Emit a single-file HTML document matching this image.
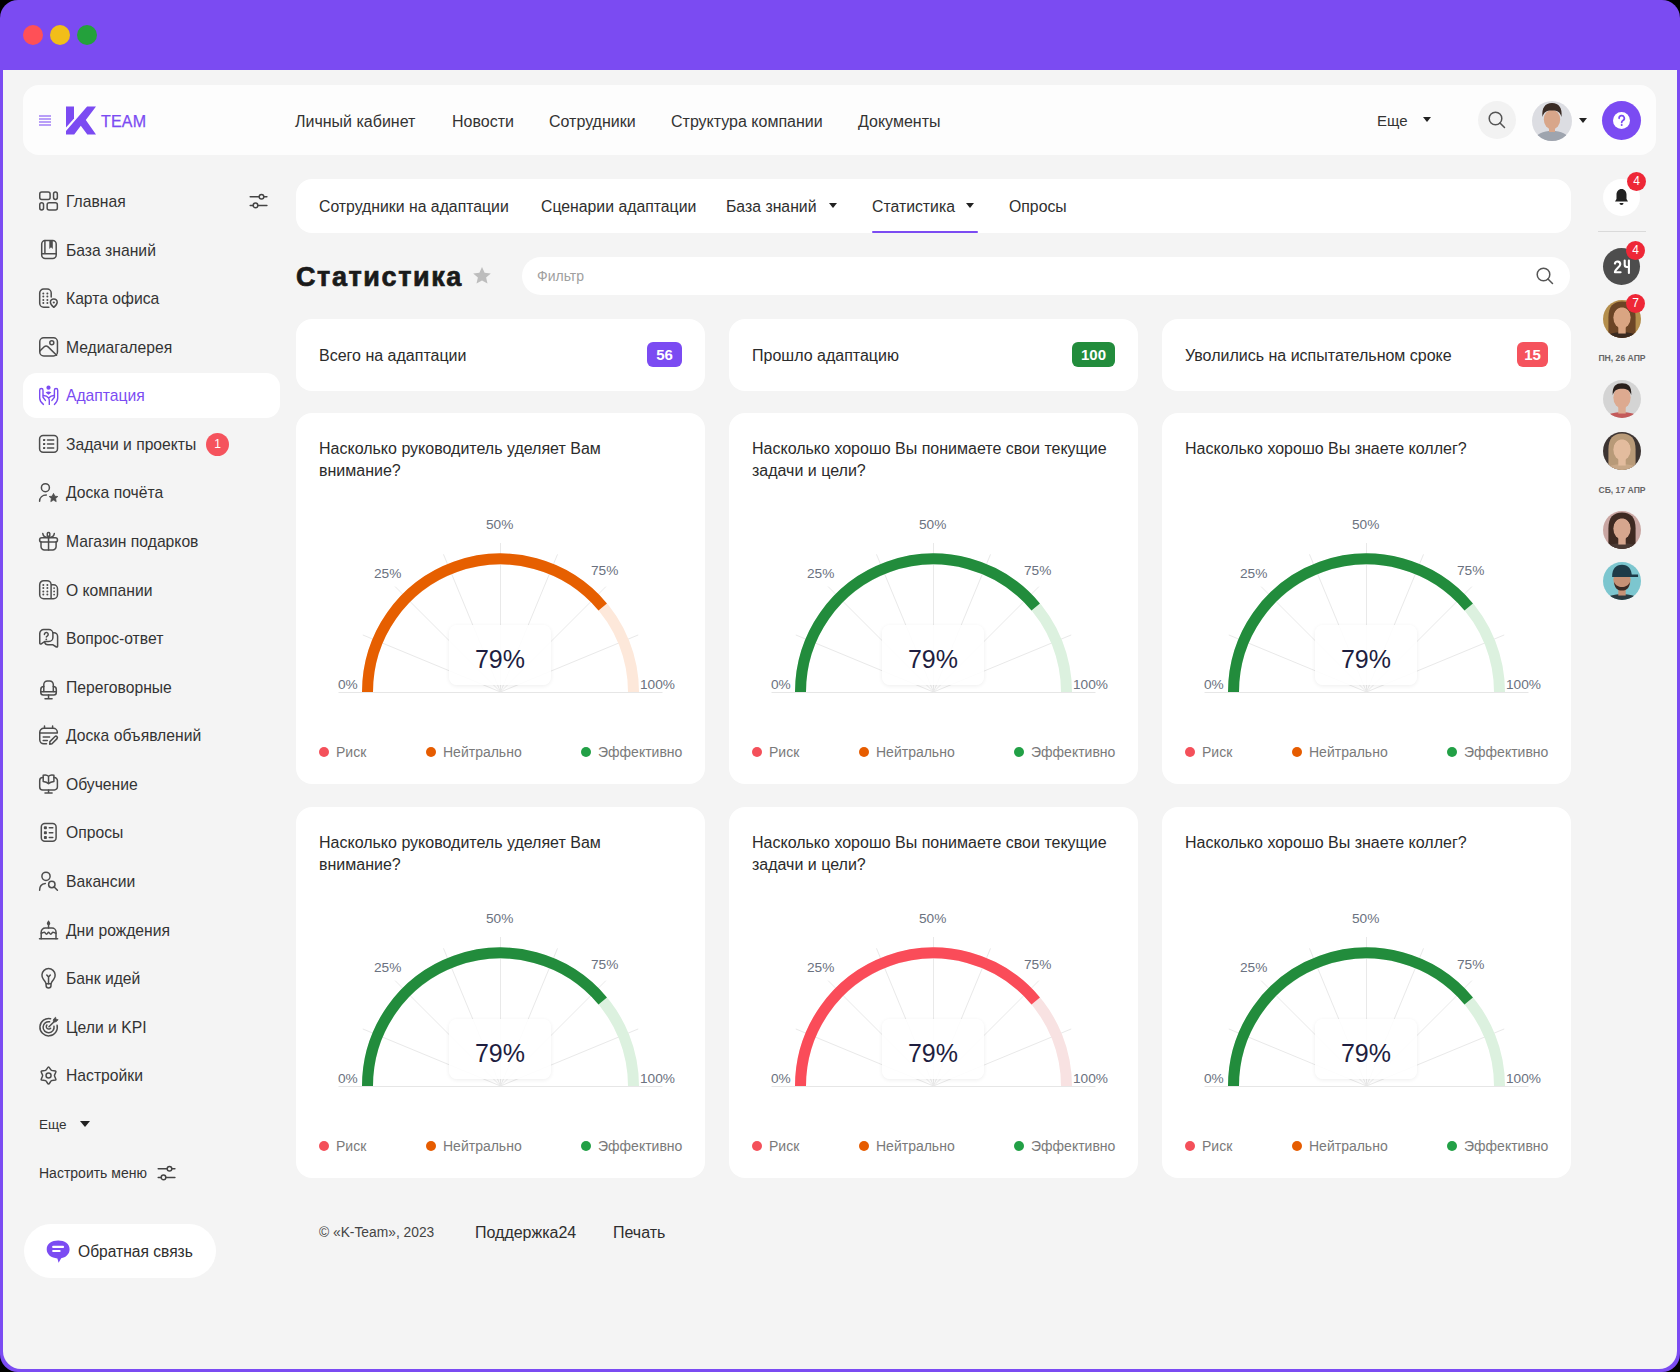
<!DOCTYPE html>
<html><head><meta charset="utf-8">
<style>
*{box-sizing:border-box;margin:0;padding:0}
html,body{width:1680px;height:1372px;overflow:hidden;background:#000}
body{font-family:"Liberation Sans",sans-serif;color:#2B2B2B;position:relative}
.frame{position:absolute;left:0;top:0;width:1680px;height:1372px;background:#7B4BF2;border-radius:18px}
.inner{position:absolute;left:3px;top:70px;width:1674px;height:1299px;background:#F4F4F4;border-radius:0 0 18px 18px}
.dot{position:absolute;top:25px;width:20px;height:20px;border-radius:50%}
.abs{position:absolute}
.hdr{position:absolute;left:23px;top:85px;width:1633px;height:70px;background:#FDFDFD;border-radius:16px}
.nav{position:absolute;top:111.5px;font-size:16px;color:#333;white-space:nowrap;line-height:20px}
.sub{position:absolute;left:296px;top:179px;width:1275px;height:54px;background:#fff;border-radius:16px}
.subi{position:absolute;top:196.5px;font-size:15.8px;color:#2E2E2E;white-space:nowrap;line-height:20px}
.tri{position:absolute;width:0;height:0;border-left:4px solid transparent;border-right:4px solid transparent;border-top:5px solid #222}
.side{position:absolute;left:66px;font-size:15.7px;color:#333;white-space:nowrap;line-height:20px}
.sico{position:absolute;left:38px;width:21px;height:21px}
.card{position:absolute;background:#fff;border-radius:16px}
.stat{top:319px;width:409px;height:72px}
.stat .t{position:absolute;left:23px;top:26.5px;font-size:16px;color:#2B2B2B;white-space:nowrap;line-height:20px}
.badge{position:absolute;top:23px;height:25px;border-radius:6px;color:#fff;font-weight:700;font-size:15px;line-height:25px;text-align:center}
.gcard{width:409px;height:371px}
.gsvg{position:absolute;left:0;top:0}
.q{position:absolute;left:23px;top:24px;font-size:16px;line-height:21.5px;color:#2B2B2B;white-space:nowrap}
.gbox{position:absolute;left:153px;top:211px;width:102px;height:60px;border-radius:8px;background:rgba(255,255,255,0.88);box-shadow:0 1px 4px rgba(0,0,0,0.07)}
.gval{position:absolute;left:153px;top:231px;width:102px;text-align:center;font-size:25px;line-height:28px;color:#1E1E3F}
.gl{position:absolute;font-size:13.7px;line-height:16px;color:#6B7280;white-space:nowrap}
.leg{position:absolute;top:329px;font-size:14px;line-height:18px;color:#7A7A7A;padding-left:17px;white-space:nowrap}
.leg i{position:absolute;left:0;top:4px;width:10px;height:10px;border-radius:50%}
.av{position:absolute;border-radius:50%}
.rb{position:absolute;width:19px;height:19px;border-radius:50%;background:#EE2737;color:#fff;font-size:12px;line-height:19px;text-align:center}
.date{position:absolute;left:1592px;width:60px;text-align:center;font-size:8.6px;font-weight:700;color:#666;line-height:10px}
</style></head><body>
<div class="frame"></div>
<div class="dot" style="left:23px;background:#FF5057"></div>
<div class="dot" style="left:50px;background:#F2BE19"></div>
<div class="dot" style="left:77px;background:#24A13C"></div>
<div class="inner"></div>

<!-- header -->
<div class="hdr"></div>
<svg class="abs" style="left:38px;top:114px" width="14" height="13" viewBox="0 0 14 13"><g stroke="#A887F7" stroke-width="1.6"><line x1="1" y1="2" x2="13" y2="2"/><line x1="1" y1="5" x2="13" y2="5"/><line x1="1" y1="8" x2="13" y2="8"/><line x1="1" y1="11" x2="13" y2="11"/></g></svg>
<svg class="abs" style="left:0;top:0" width="160" height="160" viewBox="0 0 160 160"><g fill="#7B4BF2"><path d="M66,106.5H74V118.5L66,127.5Z"/><path d="M87.1,106.5H96L85.8,120L96,134.6H87.3L80.8,125.8L74.2,134.6H66V131Z"/></g></svg>
<div class="abs" style="left:101px;top:112.3px;font-size:16px;line-height:20px;color:#7B4BF2;letter-spacing:0.2px;-webkit-text-stroke:0.25px #7B4BF2">TEAM</div>
<div class="nav" style="left:295px">Личный кабинет</div>
<div class="nav" style="left:452px">Новости</div>
<div class="nav" style="left:549px">Сотрудники</div>
<div class="nav" style="left:671px">Структура компании</div>
<div class="nav" style="left:858px">Документы</div>
<div class="nav" style="left:1377px;font-size:15px;top:110.5px">Еще</div>
<div class="tri" style="left:1423px;top:117px"></div>
<div class="av" style="left:1478px;top:101px;width:38px;height:38px;background:#F2F2F2"></div>
<svg class="abs" style="left:1487px;top:110px" width="20" height="20" viewBox="0 0 20 20"><circle cx="8.5" cy="8.5" r="6.3" fill="none" stroke="#555" stroke-width="1.5"/><line x1="13" y1="13" x2="17.5" y2="17.5" stroke="#555" stroke-width="1.5" stroke-linecap="round"/></svg>
<svg class="abs" style="left:1532px;top:101px" width="40" height="40" viewBox="0 0 40 40"><defs><clipPath id="c0"><circle cx="20" cy="20" r="20"/></clipPath></defs><g clip-path="url(#c0)"><rect width="40" height="40" fill="#DCDDE2"/><path d="M2,42C3,33 10,30 20,30C30,30 37,33 38,42Z" fill="#9EA4AE"/><rect x="17" y="24" width="6" height="7" fill="#D8A68A"/><ellipse cx="20" cy="18.5" rx="8.2" ry="9.8" fill="#D8A68A"/><path d="M10.5,16C9.5,7 13,2 20,2C27,2 30.5,7 29.5,16C28,11 26,9.5 20,9.5C14,9.5 12,11 10.5,16Z" fill="#3A2C25"/></g></svg>
<div class="tri" style="left:1579px;top:118px"></div>
<div class="av" style="left:1602px;top:101px;width:39px;height:39px;background:#7B4BF2"></div>
<div class="av" style="left:1613px;top:112px;width:17px;height:17px;background:#fff"></div><svg class="abs" style="left:1600px;top:100px" width="40" height="40" viewBox="1600 100 40 40"><path d="M1619.1,118.3A2.6,2.6 0 1 1 1623,120.4C1622.1,121 1621.7,121.5 1621.7,122.4" fill="none" stroke="#7B4BF2" stroke-width="1.7" stroke-linecap="round"/><circle cx="1621.7" cy="125.1" r="1" fill="#7B4BF2"/></svg>

<!-- right column -->
<div class="av" style="left:1603px;top:179px;width:37px;height:37px;background:#fff"></div>
<svg class="abs" style="left:1612px;top:187px" width="19" height="20" viewBox="0 0 19 20"><path d="M9.5,2C6.5,2 4.5,4.5 4.5,7.5V12L3,14.5H16L14.5,12V7.5C14.5,4.5 12.5,2 9.5,2Z" fill="#222"/><path d="M7.5,16A2,2 0 0 0 11.5,16Z" fill="#222"/></svg>
<div class="rb" style="left:1627px;top:172px">4</div>
<div class="abs" style="left:1598px;top:231px;width:48px;height:1px;background:#DADADA"></div>
<div class="av" style="left:1603px;top:248px;width:37px;height:37px;background:#4D4D4D"></div><svg class="abs" style="left:1600px;top:245px" width="40" height="40" viewBox="1600 245 40 40"><path d="M1614.9,263.6A2.75,2.75 0 0 1 1620.3,264.2C1620.3,266.6 1614.9,269.6 1614.9,272.2H1620.6" fill="none" stroke="#fff" stroke-width="2.1" stroke-linecap="round" stroke-linejoin="round"/><path d="M1624.7,260.5V264.8A2.2,2.2 0 0 0 1626.9,267H1628.9M1628.9,260.5V272.9" fill="none" stroke="#fff" stroke-width="2.1" stroke-linecap="round" stroke-linejoin="round"/></svg>
<div class="rb" style="left:1626px;top:241px">4</div>
<svg class="abs" style="left:1603px;top:300px" width="38" height="38" viewBox="0 0 40 40"><defs><clipPath id="c1"><circle cx="20" cy="20" r="20"/></clipPath></defs><g clip-path="url(#c1)"><rect width="40" height="40" fill="#B48E4C"/><g transform="translate(20,21) scale(1.3) translate(-20,-20)"><path d="M9,40V18C9,9 13,5 20,5C27,5 31,9 31,18V40Z" fill="#6B4526"/><path d="M2,42C3,33 10,30 20,30C30,30 37,33 38,42Z" fill="#3A2A20"/><rect x="17" y="24" width="6" height="7" fill="#D9A582"/><ellipse cx="20" cy="18" rx="7" ry="8.8" fill="#D9A582"/><path d="M12.5,17C12,9 15,6 20,6C25,6 28,9 27.5,17C26,12 23,10 20,10C17,10 14,12 12.5,17Z" fill="#6B4526"/></g></g></svg>
<div class="rb" style="left:1626px;top:294px">7</div>
<div class="date" style="top:353px">ПН, 26 АПР</div>
<svg class="abs" style="left:1603px;top:380px" width="38" height="38" viewBox="0 0 40 40"><defs><clipPath id="c2"><circle cx="20" cy="20" r="20"/></clipPath></defs><g clip-path="url(#c2)"><rect width="40" height="40" fill="#D4D4D4"/><g transform="translate(20,21) scale(1.3) translate(-20,-20)"><path d="M2,42C3,33 10,30 20,30C30,30 37,33 38,42Z" fill="#C45A5A"/><rect x="17" y="24" width="6" height="7" fill="#DDAA90"/><ellipse cx="20" cy="18" rx="7" ry="8.8" fill="#DDAA90"/><path d="M12.5,16C12,9 15,6.5 20,6.5C25,6.5 28,9 27.5,16C26,12 24,11 20,11C16,11 14,12 12.5,16Z" fill="#2A201C"/></g></g></svg>
<svg class="abs" style="left:1603px;top:432px" width="38" height="38" viewBox="0 0 40 40"><defs><clipPath id="c3"><circle cx="20" cy="20" r="20"/></clipPath></defs><g clip-path="url(#c3)"><rect width="40" height="40" fill="#3C3432"/><g transform="translate(20,21) scale(1.3) translate(-20,-20)"><path d="M9,40V18C9,9 13,5 20,5C27,5 31,9 31,18V40Z" fill="#B89A78"/><path d="M2,42C3,33 10,30 20,30C30,30 37,33 38,42Z" fill="#C8A888"/><rect x="17" y="24" width="6" height="7" fill="#E3BC9E"/><ellipse cx="20" cy="18" rx="7" ry="8.8" fill="#E3BC9E"/><path d="M12.5,17C12,9 15,6 20,6C25,6 28,9 27.5,17C26,12 23,10 20,10C17,10 14,12 12.5,17Z" fill="#B89A78"/></g></g></svg>
<div class="date" style="top:485px">СБ, 17 АПР</div>
<svg class="abs" style="left:1603px;top:511px" width="38" height="38" viewBox="0 0 40 40"><defs><clipPath id="c4"><circle cx="20" cy="20" r="20"/></clipPath></defs><g clip-path="url(#c4)"><rect width="40" height="40" fill="#C9A6A2"/><g transform="translate(20,21) scale(1.3) translate(-20,-20)"><path d="M9,40V18C9,9 13,5 20,5C27,5 31,9 31,18V40Z" fill="#3E2A22"/><path d="M2,42C3,33 10,30 20,30C30,30 37,33 38,42Z" fill="#4A3A34"/><rect x="17" y="24" width="6" height="7" fill="#D6A68E"/><ellipse cx="20" cy="18" rx="7" ry="8.8" fill="#D6A68E"/><path d="M12.5,17C12,9 15,6 20,6C25,6 28,9 27.5,17C26,12 23,10 20,10C17,10 14,12 12.5,17Z" fill="#3E2A22"/></g></g></svg>
<svg class="abs" style="left:1603px;top:562px" width="38" height="38" viewBox="0 0 40 40"><defs><clipPath id="c5"><circle cx="20" cy="20" r="20"/></clipPath></defs><g clip-path="url(#c5)"><rect width="40" height="40" fill="#7CC6CF"/><g transform="translate(20,21) scale(1.3) translate(-20,-20)"><path d="M2,42C3,33 10,30 20,30C30,30 37,33 38,42Z" fill="#2A3A40"/><rect x="17" y="24" width="6" height="7" fill="#C69276"/><ellipse cx="20" cy="18" rx="7" ry="8.8" fill="#C69276"/><path d="M12,16C12,9 15,6 20,6C25,6 28,9 28,16Z M24,14H33V16H24Z" fill="#1E3B48"/><path d="M13.5,20C14,25 16.5,27 20,27C23.5,27 26,25 26.5,20C25,23 23,24 20,24C17,24 15,23 13.5,20Z" fill="#3A2A24"/></g></g></svg>

<!-- subnav -->
<div class="sub"></div>
<div class="subi" style="left:319px">Сотрудники на адаптации</div>
<div class="subi" style="left:541px">Сценарии адаптации</div>
<div class="subi" style="left:726px">База знаний</div>
<div class="tri" style="left:829px;top:203px"></div>
<div class="subi" style="left:872px">Статистика</div>
<div class="tri" style="left:966px;top:203px"></div>
<div class="abs" style="left:872px;top:231px;width:106px;height:2px;background:#7B4BF2;border-radius:1px"></div>
<div class="subi" style="left:1009px">Опросы</div>

<!-- title + filter -->
<div class="abs" style="left:296px;top:260.5px;font-size:27px;font-weight:700;line-height:32px;color:#1A1A1A;letter-spacing:1.6px;-webkit-text-stroke:0.7px #1A1A1A;white-space:nowrap">Статистика</div>
<svg class="abs" style="left:471.5px;top:266px" width="20" height="19" viewBox="0 0 20 19"><path d="M10,1L12.6,6.8L18.8,7.4L14.1,11.5L15.5,17.6L10,14.4L4.5,17.6L5.9,11.5L1.2,7.4L7.4,6.8Z" fill="#BDBDBD"/></svg>
<div class="abs" style="left:522px;top:257px;width:1048px;height:38px;background:#fff;border-radius:19px"></div>
<div class="abs" style="left:537px;top:268px;font-size:14px;line-height:16px;color:#A0A0A0">Фильтр</div>
<svg class="abs" style="left:1535px;top:266px" width="20" height="20" viewBox="0 0 20 20"><circle cx="8.5" cy="8.5" r="6.3" fill="none" stroke="#555" stroke-width="1.5"/><line x1="13" y1="13" x2="17.5" y2="17.5" stroke="#555" stroke-width="1.5" stroke-linecap="round"/></svg>

<!-- stat cards -->
<div class="card stat" style="left:296px"><div class="t">Всего на адаптации</div><div class="badge" style="left:351px;width:35px;background:#7B4BF2">56</div></div>
<div class="card stat" style="left:729px"><div class="t">Прошло адаптацию</div><div class="badge" style="left:343px;width:43px;background:#228C3C">100</div></div>
<div class="card stat" style="left:1162px"><div class="t">Уволились на испытательном сроке</div><div class="badge" style="left:355px;width:31px;background:#F5535D">15</div></div>

<!-- gauge cards -->
<div class="card gcard" style="left:296px;top:413px"><div style="position:absolute;left:0;top:1px;width:409px;height:369px">
<div class="q">Насколько руководитель уделяет Вам<br>внимание?</div>
<svg class="gsvg" width="409" height="369" viewBox="0 0 409 369"><line x1="42.5" y1="278.5" x2="366.5" y2="278.5" stroke="#E6E6E6" stroke-width="1"/><line x1="204.5" y1="278" x2="66.84" y2="220.98" stroke="#E9E9E9" stroke-width="1"/><line x1="204.5" y1="278" x2="99.14" y2="172.64" stroke="#E9E9E9" stroke-width="1"/><line x1="204.5" y1="278" x2="147.48" y2="140.34" stroke="#E9E9E9" stroke-width="1"/><line x1="204.5" y1="278" x2="204.50" y2="129.00" stroke="#E9E9E9" stroke-width="1"/><line x1="204.5" y1="278" x2="261.52" y2="140.34" stroke="#E9E9E9" stroke-width="1"/><line x1="204.5" y1="278" x2="309.86" y2="172.64" stroke="#E9E9E9" stroke-width="1"/><line x1="204.5" y1="278" x2="342.16" y2="220.98" stroke="#E9E9E9" stroke-width="1"/><path d="M71.5,278 A133,133 0 0 1 337.5,278" fill="none" stroke="#FDE8DA" stroke-width="11"/><path d="M71.5,278 A133,133 0 0 1 306.71,192.90" fill="none" stroke="#E65F00" stroke-width="11"/></svg>
<div class="gbox"></div>
<div class="gval">79%</div>
<div class="gl" style="left:42px;top:263px">0%</div>
<div class="gl" style="left:78px;top:152px">25%</div>
<div class="gl" style="left:190px;top:102.5px">50%</div>
<div class="gl" style="left:295px;top:149px">75%</div>
<div class="gl" style="left:344px;top:263px">100%</div>
<div class="leg" style="left:23px"><i style="background:#F4505A"></i>Риск</div>
<div class="leg" style="left:130px"><i style="background:#E65C00"></i>Нейтрально</div>
<div class="leg" style="left:285px"><i style="background:#22A046"></i>Эффективно</div>
</div></div>
<div class="card gcard" style="left:729px;top:413px"><div style="position:absolute;left:0;top:1px;width:409px;height:369px">
<div class="q">Насколько хорошо Вы понимаете свои текущие<br>задачи и цели?</div>
<svg class="gsvg" width="409" height="369" viewBox="0 0 409 369"><line x1="42.5" y1="278.5" x2="366.5" y2="278.5" stroke="#E6E6E6" stroke-width="1"/><line x1="204.5" y1="278" x2="66.84" y2="220.98" stroke="#E9E9E9" stroke-width="1"/><line x1="204.5" y1="278" x2="99.14" y2="172.64" stroke="#E9E9E9" stroke-width="1"/><line x1="204.5" y1="278" x2="147.48" y2="140.34" stroke="#E9E9E9" stroke-width="1"/><line x1="204.5" y1="278" x2="204.50" y2="129.00" stroke="#E9E9E9" stroke-width="1"/><line x1="204.5" y1="278" x2="261.52" y2="140.34" stroke="#E9E9E9" stroke-width="1"/><line x1="204.5" y1="278" x2="309.86" y2="172.64" stroke="#E9E9E9" stroke-width="1"/><line x1="204.5" y1="278" x2="342.16" y2="220.98" stroke="#E9E9E9" stroke-width="1"/><path d="M71.5,278 A133,133 0 0 1 337.5,278" fill="none" stroke="#DCF1DF" stroke-width="11"/><path d="M71.5,278 A133,133 0 0 1 306.71,192.90" fill="none" stroke="#228C3C" stroke-width="11"/></svg>
<div class="gbox"></div>
<div class="gval">79%</div>
<div class="gl" style="left:42px;top:263px">0%</div>
<div class="gl" style="left:78px;top:152px">25%</div>
<div class="gl" style="left:190px;top:102.5px">50%</div>
<div class="gl" style="left:295px;top:149px">75%</div>
<div class="gl" style="left:344px;top:263px">100%</div>
<div class="leg" style="left:23px"><i style="background:#F4505A"></i>Риск</div>
<div class="leg" style="left:130px"><i style="background:#E65C00"></i>Нейтрально</div>
<div class="leg" style="left:285px"><i style="background:#22A046"></i>Эффективно</div>
</div></div>
<div class="card gcard" style="left:1162px;top:413px"><div style="position:absolute;left:0;top:1px;width:409px;height:369px">
<div class="q">Насколько хорошо Вы знаете коллег?</div>
<svg class="gsvg" width="409" height="369" viewBox="0 0 409 369"><line x1="42.5" y1="278.5" x2="366.5" y2="278.5" stroke="#E6E6E6" stroke-width="1"/><line x1="204.5" y1="278" x2="66.84" y2="220.98" stroke="#E9E9E9" stroke-width="1"/><line x1="204.5" y1="278" x2="99.14" y2="172.64" stroke="#E9E9E9" stroke-width="1"/><line x1="204.5" y1="278" x2="147.48" y2="140.34" stroke="#E9E9E9" stroke-width="1"/><line x1="204.5" y1="278" x2="204.50" y2="129.00" stroke="#E9E9E9" stroke-width="1"/><line x1="204.5" y1="278" x2="261.52" y2="140.34" stroke="#E9E9E9" stroke-width="1"/><line x1="204.5" y1="278" x2="309.86" y2="172.64" stroke="#E9E9E9" stroke-width="1"/><line x1="204.5" y1="278" x2="342.16" y2="220.98" stroke="#E9E9E9" stroke-width="1"/><path d="M71.5,278 A133,133 0 0 1 337.5,278" fill="none" stroke="#DCF1DF" stroke-width="11"/><path d="M71.5,278 A133,133 0 0 1 306.71,192.90" fill="none" stroke="#228C3C" stroke-width="11"/></svg>
<div class="gbox"></div>
<div class="gval">79%</div>
<div class="gl" style="left:42px;top:263px">0%</div>
<div class="gl" style="left:78px;top:152px">25%</div>
<div class="gl" style="left:190px;top:102.5px">50%</div>
<div class="gl" style="left:295px;top:149px">75%</div>
<div class="gl" style="left:344px;top:263px">100%</div>
<div class="leg" style="left:23px"><i style="background:#F4505A"></i>Риск</div>
<div class="leg" style="left:130px"><i style="background:#E65C00"></i>Нейтрально</div>
<div class="leg" style="left:285px"><i style="background:#22A046"></i>Эффективно</div>
</div></div>
<div class="card gcard" style="left:296px;top:807px"><div style="position:absolute;left:0;top:1px;width:409px;height:369px">
<div class="q">Насколько руководитель уделяет Вам<br>внимание?</div>
<svg class="gsvg" width="409" height="369" viewBox="0 0 409 369"><line x1="42.5" y1="278.5" x2="366.5" y2="278.5" stroke="#E6E6E6" stroke-width="1"/><line x1="204.5" y1="278" x2="66.84" y2="220.98" stroke="#E9E9E9" stroke-width="1"/><line x1="204.5" y1="278" x2="99.14" y2="172.64" stroke="#E9E9E9" stroke-width="1"/><line x1="204.5" y1="278" x2="147.48" y2="140.34" stroke="#E9E9E9" stroke-width="1"/><line x1="204.5" y1="278" x2="204.50" y2="129.00" stroke="#E9E9E9" stroke-width="1"/><line x1="204.5" y1="278" x2="261.52" y2="140.34" stroke="#E9E9E9" stroke-width="1"/><line x1="204.5" y1="278" x2="309.86" y2="172.64" stroke="#E9E9E9" stroke-width="1"/><line x1="204.5" y1="278" x2="342.16" y2="220.98" stroke="#E9E9E9" stroke-width="1"/><path d="M71.5,278 A133,133 0 0 1 337.5,278" fill="none" stroke="#DCF1DF" stroke-width="11"/><path d="M71.5,278 A133,133 0 0 1 306.71,192.90" fill="none" stroke="#228C3C" stroke-width="11"/></svg>
<div class="gbox"></div>
<div class="gval">79%</div>
<div class="gl" style="left:42px;top:263px">0%</div>
<div class="gl" style="left:78px;top:152px">25%</div>
<div class="gl" style="left:190px;top:102.5px">50%</div>
<div class="gl" style="left:295px;top:149px">75%</div>
<div class="gl" style="left:344px;top:263px">100%</div>
<div class="leg" style="left:23px"><i style="background:#F4505A"></i>Риск</div>
<div class="leg" style="left:130px"><i style="background:#E65C00"></i>Нейтрально</div>
<div class="leg" style="left:285px"><i style="background:#22A046"></i>Эффективно</div>
</div></div>
<div class="card gcard" style="left:729px;top:807px"><div style="position:absolute;left:0;top:1px;width:409px;height:369px">
<div class="q">Насколько хорошо Вы понимаете свои текущие<br>задачи и цели?</div>
<svg class="gsvg" width="409" height="369" viewBox="0 0 409 369"><line x1="42.5" y1="278.5" x2="366.5" y2="278.5" stroke="#E6E6E6" stroke-width="1"/><line x1="204.5" y1="278" x2="66.84" y2="220.98" stroke="#E9E9E9" stroke-width="1"/><line x1="204.5" y1="278" x2="99.14" y2="172.64" stroke="#E9E9E9" stroke-width="1"/><line x1="204.5" y1="278" x2="147.48" y2="140.34" stroke="#E9E9E9" stroke-width="1"/><line x1="204.5" y1="278" x2="204.50" y2="129.00" stroke="#E9E9E9" stroke-width="1"/><line x1="204.5" y1="278" x2="261.52" y2="140.34" stroke="#E9E9E9" stroke-width="1"/><line x1="204.5" y1="278" x2="309.86" y2="172.64" stroke="#E9E9E9" stroke-width="1"/><line x1="204.5" y1="278" x2="342.16" y2="220.98" stroke="#E9E9E9" stroke-width="1"/><path d="M71.5,278 A133,133 0 0 1 337.5,278" fill="none" stroke="#F8E2E2" stroke-width="11"/><path d="M71.5,278 A133,133 0 0 1 306.71,192.90" fill="none" stroke="#FA4C59" stroke-width="11"/></svg>
<div class="gbox"></div>
<div class="gval">79%</div>
<div class="gl" style="left:42px;top:263px">0%</div>
<div class="gl" style="left:78px;top:152px">25%</div>
<div class="gl" style="left:190px;top:102.5px">50%</div>
<div class="gl" style="left:295px;top:149px">75%</div>
<div class="gl" style="left:344px;top:263px">100%</div>
<div class="leg" style="left:23px"><i style="background:#F4505A"></i>Риск</div>
<div class="leg" style="left:130px"><i style="background:#E65C00"></i>Нейтрально</div>
<div class="leg" style="left:285px"><i style="background:#22A046"></i>Эффективно</div>
</div></div>
<div class="card gcard" style="left:1162px;top:807px"><div style="position:absolute;left:0;top:1px;width:409px;height:369px">
<div class="q">Насколько хорошо Вы знаете коллег?</div>
<svg class="gsvg" width="409" height="369" viewBox="0 0 409 369"><line x1="42.5" y1="278.5" x2="366.5" y2="278.5" stroke="#E6E6E6" stroke-width="1"/><line x1="204.5" y1="278" x2="66.84" y2="220.98" stroke="#E9E9E9" stroke-width="1"/><line x1="204.5" y1="278" x2="99.14" y2="172.64" stroke="#E9E9E9" stroke-width="1"/><line x1="204.5" y1="278" x2="147.48" y2="140.34" stroke="#E9E9E9" stroke-width="1"/><line x1="204.5" y1="278" x2="204.50" y2="129.00" stroke="#E9E9E9" stroke-width="1"/><line x1="204.5" y1="278" x2="261.52" y2="140.34" stroke="#E9E9E9" stroke-width="1"/><line x1="204.5" y1="278" x2="309.86" y2="172.64" stroke="#E9E9E9" stroke-width="1"/><line x1="204.5" y1="278" x2="342.16" y2="220.98" stroke="#E9E9E9" stroke-width="1"/><path d="M71.5,278 A133,133 0 0 1 337.5,278" fill="none" stroke="#DCF1DF" stroke-width="11"/><path d="M71.5,278 A133,133 0 0 1 306.71,192.90" fill="none" stroke="#228C3C" stroke-width="11"/></svg>
<div class="gbox"></div>
<div class="gval">79%</div>
<div class="gl" style="left:42px;top:263px">0%</div>
<div class="gl" style="left:78px;top:152px">25%</div>
<div class="gl" style="left:190px;top:102.5px">50%</div>
<div class="gl" style="left:295px;top:149px">75%</div>
<div class="gl" style="left:344px;top:263px">100%</div>
<div class="leg" style="left:23px"><i style="background:#F4505A"></i>Риск</div>
<div class="leg" style="left:130px"><i style="background:#E65C00"></i>Нейтрально</div>
<div class="leg" style="left:285px"><i style="background:#22A046"></i>Эффективно</div>
</div></div>


<!-- sidebar -->
<div class="abs" style="left:23px;top:373px;width:257px;height:45px;background:#fff;border-radius:14px"></div>
<svg class="abs" style="left:34px;top:187px" width="30" height="28" viewBox="0 0 30 28"><g fill="none" stroke="#4D4D4D" stroke-width="1.5" stroke-linecap="round" stroke-linejoin="round"><rect x="5.75" y="5.1" width="10.35" height="7.3" rx="2"/><rect x="19.55" y="5.1" width="3.8" height="7.3" rx="1.9"/><rect x="5.75" y="15.85" width="3.8" height="7.15" rx="1.9"/><rect x="13.15" y="15.85" width="10.2" height="7.15" rx="2"/></g></svg><div class="side" style="top:192.3px;color:#333">Главная</div>
<svg class="abs" style="left:34px;top:236px" width="30" height="28" viewBox="0 0 30 28"><g fill="none" stroke="#4D4D4D" stroke-width="1.5" stroke-linecap="round" stroke-linejoin="round"><rect x="7.7" y="4.5" width="14.5" height="18" rx="3.5"/><path d="M10.9,4.5V17.5M7.7,17.8H22.2"/></g><path d="M15.3,4.4H18.8V12.9L17,11.2L15.3,12.9Z" fill="#4D4D4D"/></svg><div class="side" style="top:241.3px;color:#333">База знаний</div>
<svg class="abs" style="left:34px;top:284px" width="30" height="28" viewBox="0 0 30 28"><g fill="none" stroke="#4D4D4D" stroke-width="1.5" stroke-linecap="round" stroke-linejoin="round"><path d="M14.9,23.2H9.7A4,4 0 0 1 5.7,19.2V9.1A4,4 0 0 1 9.7,5.1H13.2A4,4 0 0 1 17.2,9.1V12.9"/><path d="M19.8,23.3C17.5,21.5 16.4,19.9 16.4,18.3A3.4,3.4 0 0 1 23.2,18.3C23.2,19.9 22.1,21.5 19.8,23.3Z"/></g><g fill="#4D4D4D"><circle cx="9.3" cy="9.4" r="1"/><circle cx="13.35" cy="9.4" r="1"/><circle cx="9.3" cy="12.6" r="1"/><circle cx="13.35" cy="12.6" r="1"/><circle cx="9.3" cy="15.9" r="1"/><circle cx="13.35" cy="15.9" r="1"/><circle cx="9.3" cy="19.1" r="1"/><circle cx="13.35" cy="19.1" r="1"/><circle cx="19.8" cy="18.5" r="1.1"/></g></svg><div class="side" style="top:289.3px;color:#333">Карта офиса</div>
<svg class="abs" style="left:34px;top:333px" width="30" height="28" viewBox="0 0 30 28"><g fill="none" stroke="#4D4D4D" stroke-width="1.5" stroke-linecap="round" stroke-linejoin="round"><rect x="5.75" y="4.75" width="17.7" height="18.25" rx="4"/><circle cx="17.8" cy="9.85" r="2"/><path d="M5.9,18L10.2,13.8Q12.1,12 14.1,13.9L22.6,22.3"/></g></svg><div class="side" style="top:338.3px;color:#333">Медиагалерея</div>
<svg class="abs" style="left:34px;top:381px" width="30" height="28" viewBox="0 0 30 28"><g transform="translate(0,1)"><g fill="none" stroke="#7B4BF2" stroke-width="1.4" stroke-linecap="round" stroke-linejoin="round"><path d="M9.4,22.4C7,20.5 5.7,19 5.7,16V8.2A1.65,1.65 0 0 1 9,8.2V15.3L11.4,18.4"/><path d="M20.4,22.4C22.5,20.5 23.7,19 23.7,16V8.2A1.65,1.65 0 0 0 20.4,8.2V15.3L17.9,18.4"/><path d="M9.4,13.5C11.5,13.5 13.5,14.5 14.7,16C15.1,17 15.3,18 15.3,19V22.4M20,13.5C18,13.5 16,14.5 14.7,16"/></g><circle cx="14.5" cy="5.7" r="2.1" fill="#7B4BF2"/><path d="M11.6,10.4Q14.5,8.6 17.4,10.4L14.5,12.8Z" fill="#7B4BF2"/></g></svg><div class="side" style="top:386.3px;color:#7B4BF2">Адаптация</div>
<svg class="abs" style="left:34px;top:430px" width="30" height="28" viewBox="0 0 30 28"><g fill="none" stroke="#4D4D4D" stroke-width="1.5" stroke-linecap="round" stroke-linejoin="round"><rect x="5.6" y="5.6" width="17.9" height="16.6" rx="3.5"/><path d="M13.5,10H19.7M13.5,14H19.7M13.5,18H19.7"/></g><g fill="#4D4D4D"><rect x="9" y="8.9" width="2.2" height="2.2" rx="0.7"/><rect x="9" y="12.9" width="2.2" height="2.2" rx="0.7"/><rect x="9" y="16.9" width="2.2" height="2.2" rx="0.7"/></g></svg><div class="side" style="top:435.3px;color:#333">Задачи и проекты</div>
<svg class="abs" style="left:34px;top:478px" width="30" height="28" viewBox="0 0 30 28"><g fill="none" stroke="#4D4D4D" stroke-width="1.5" stroke-linecap="round" stroke-linejoin="round"><circle cx="11.4" cy="9.7" r="4"/><path d="M5.6,23.3C5.6,19.5 8.5,17 12.3,17"/></g><path d="M19.5,15.4L20.8,18.2L23.8,18.5L21.6,20.6L22.2,23.6L19.5,22.1L16.8,23.6L17.4,20.6L15.2,18.5L18.2,18.2Z" fill="#4D4D4D" stroke="#4D4D4D" stroke-width="0.8" stroke-linejoin="round"/></svg><div class="side" style="top:483.3px;color:#333">Доска почёта</div>
<svg class="abs" style="left:34px;top:527px" width="30" height="28" viewBox="0 0 30 28"><g fill="none" stroke="#4D4D4D" stroke-width="1.5" stroke-linecap="round" stroke-linejoin="round"><rect x="5.6" y="10.7" width="17.9" height="4.4" rx="2.2"/><path d="M7,15.1V19.5A3.5,3.5 0 0 0 10.5,23H18.6A3.5,3.5 0 0 0 22.1,19.5V15.1"/><path d="M14.55,10.7V23"/><path d="M14.55,10.3C13.2,8.8 12.9,7.7 13.3,6.4A1.3,1.3 0 0 1 15.8,6.4C16.2,7.7 15.9,8.8 14.55,10.3Z"/><path d="M8.8,6.6C9.2,9.3 11,10.5 14.55,10.6C18.1,10.5 19.9,9.3 20.3,6.6"/></g></svg><div class="side" style="top:532.3px;color:#333">Магазин подарков</div>
<svg class="abs" style="left:34px;top:576px" width="30" height="28" viewBox="0 0 30 28"><g fill="none" stroke="#4D4D4D" stroke-width="1.5" stroke-linecap="round" stroke-linejoin="round"><path d="M17.1,22.7H9.7A4,4 0 0 1 5.7,18.7V8.7A4,4 0 0 1 9.7,4.7H13.1A4,4 0 0 1 17.1,8.7V22.7H19.5A4,4 0 0 0 23.5,18.7V12.8A4,4 0 0 0 19.5,8.8H17.1"/></g><g fill="#4D4D4D"><circle cx="9.3" cy="8.9" r="1"/><circle cx="13.35" cy="8.9" r="1"/><circle cx="9.3" cy="12.1" r="1"/><circle cx="13.35" cy="12.1" r="1"/><circle cx="9.3" cy="15.4" r="1"/><circle cx="13.35" cy="15.4" r="1"/><circle cx="9.3" cy="18.6" r="1"/><circle cx="13.35" cy="18.6" r="1"/><circle cx="20.1" cy="12.1" r="0.9"/><circle cx="20.1" cy="15.4" r="0.9"/><circle cx="20.1" cy="18.6" r="0.9"/></g></svg><div class="side" style="top:581.3px;color:#333">О компании</div>
<svg class="abs" style="left:34px;top:624px" width="30" height="28" viewBox="0 0 30 28"><g fill="none" stroke="#4D4D4D" stroke-width="1.5" stroke-linecap="round" stroke-linejoin="round"><path d="M5.75,19V9.5A4,4 0 0 1 9.75,5.5H14.9A4,4 0 0 1 18.9,9.5V13.5A4,4 0 0 1 14.9,17.5H10.6L7.3,19.9A1,1 0 0 1 5.75,19Z"/><path d="M18.9,8.8H20A3.6,3.6 0 0 1 23.6,12.4V22.3A0.8,0.8 0 0 1 22.4,23L19,20.8H13.8A3.2,3.2 0 0 1 10.7,18.2"/><path d="M10.4,10.5A1.9,1.9 0 1 1 13.6,11.8C13,12.4 12.3,12.6 12.3,13.1"/></g><circle cx="12.3" cy="15.3" r="0.9" fill="#4D4D4D"/></svg><div class="side" style="top:629.3px;color:#333">Вопрос-ответ</div>
<svg class="abs" style="left:34px;top:673px" width="30" height="28" viewBox="0 0 30 28"><g fill="none" stroke="#4D4D4D" stroke-width="1.5" stroke-linecap="round" stroke-linejoin="round"><path d="M9.8,18.5V11.5A3.5,3.5 0 0 1 13.3,8H15.8A3.5,3.5 0 0 1 19.3,11.5V18.5"/><path d="M9.8,13.5A3,3 0 0 0 6.8,16.5V19.5A2.5,2.5 0 0 0 9.3,22H19.8A2.5,2.5 0 0 0 22.3,19.5V16.5A3,3 0 0 0 19.3,13.5"/><path d="M6.8,18.8H22.3"/><path d="M14.55,22V25.8M11,25.8H18.1"/></g></svg><div class="side" style="top:678.3px;color:#333">Переговорные</div>
<svg class="abs" style="left:34px;top:721px" width="30" height="28" viewBox="0 0 30 28"><g fill="none" stroke="#4D4D4D" stroke-width="1.5" stroke-linecap="round" stroke-linejoin="round"><path d="M12.5,22.8H9.75A4,4 0 0 1 5.75,18.8V11.3A4,4 0 0 1 9.75,7.3H19.3A4,4 0 0 1 23.3,11.3V12H5.75"/><path d="M10.5,5V7.3M18.6,5V7.3"/><path d="M9.2,16.1H15.6M9.2,19.4H13.3"/><path d="M15.9,20.6L21,15.5A1.5,1.5 0 0 1 23.1,17.6L18,22.7L15.7,23.2Z"/></g></svg><div class="side" style="top:726.3px;color:#333">Доска объявлений</div>
<svg class="abs" style="left:34px;top:770px" width="30" height="28" viewBox="0 0 30 28"><g fill="none" stroke="#4D4D4D" stroke-width="1.5" stroke-linecap="round" stroke-linejoin="round"><path d="M9.2,7.6H8.7A3,3 0 0 0 5.7,10.6V16.9A3,3 0 0 0 8.7,19.9H20.4A3,3 0 0 0 23.4,16.9V10.6A3,3 0 0 0 20.4,7.6H19.9"/><path d="M14.55,6.2C13.3,5 11.3,4.6 9.2,5.2V11.6C11.3,11.9 13.3,12.6 14.55,13.8C15.8,12.6 17.8,11.9 19.9,11.6V5.2C17.8,4.6 15.8,5 14.55,6.2V13.8"/><path d="M14.55,19.9V23M11,23H18.1"/></g></svg><div class="side" style="top:775.3px;color:#333">Обучение</div>
<svg class="abs" style="left:34px;top:818px" width="30" height="28" viewBox="0 0 30 28"><g fill="none" stroke="#4D4D4D" stroke-width="1.5" stroke-linecap="round" stroke-linejoin="round"><rect x="7.3" y="5.6" width="14.8" height="17.7" rx="3.5"/><path d="M15.3,9.85H18.8M15.3,14.7H18.8M15.3,19.6H18.8"/></g><g fill="#4D4D4D"><rect x="9.9" y="8.35" width="3" height="3" rx="0.8"/><rect x="9.9" y="13.2" width="3" height="3" rx="0.8"/><rect x="9.9" y="18.1" width="3" height="3" rx="0.8"/></g></svg><div class="side" style="top:823.3px;color:#333">Опросы</div>
<svg class="abs" style="left:34px;top:867px" width="30" height="28" viewBox="0 0 30 28"><g fill="none" stroke="#4D4D4D" stroke-width="1.5" stroke-linecap="round" stroke-linejoin="round"><circle cx="12" cy="9.3" r="4.1"/><path d="M5.6,23.3C5.6,19.5 8,17 11.3,16.6"/><circle cx="17.8" cy="17.5" r="3.2"/><path d="M20.2,19.9L23.4,23.2"/></g></svg><div class="side" style="top:872.3px;color:#333">Вакансии</div>
<svg class="abs" style="left:34px;top:916px" width="30" height="28" viewBox="0 0 30 28"><g fill="none" stroke="#4D4D4D" stroke-width="1.5" stroke-linecap="round" stroke-linejoin="round"><path d="M5.5,22.8H23.6"/><path d="M7.2,22.8V16A4,4 0 0 1 11.2,12H18A4,4 0 0 1 22,16V22.8"/><path d="M7.2,17.2C8.5,17.2 9.2,16.2 10.2,16.2C11.2,16.2 11.5,18.2 12.5,18.2C13.5,18.2 13.8,16.2 14.55,16.2C15.3,16.2 15.8,18.2 16.8,18.2C17.8,18.2 18,16.2 19,16.2C20,16.2 20.8,17.2 22,17.2"/><path d="M14.55,9.4V12"/></g><path d="M14.55,4.2C13.6,5.6 12.8,6.6 12.8,7.6A1.75,1.75 0 0 0 16.3,7.6C16.3,6.6 15.5,5.6 14.55,4.2Z" fill="#4D4D4D"/></svg><div class="side" style="top:921.3px;color:#333">Дни рождения</div>
<svg class="abs" style="left:34px;top:964px" width="30" height="28" viewBox="0 0 30 28"><g fill="none" stroke="#4D4D4D" stroke-width="1.5" stroke-linecap="round" stroke-linejoin="round"><path d="M12.1,19.7C11.6,17.5 10.4,16.4 9.4,15.3A6.6,6.6 0 1 1 19.7,15.3C18.7,16.4 17.5,17.5 17,19.7"/><path d="M12.1,19.7V21.5A2.5,2.5 0 0 0 14.6,24H14.5A2.5,2.5 0 0 0 17,21.5V19.7Z"/><path d="M12.8,11L14.55,13L16.3,11M14.55,13V19.7"/></g></svg><div class="side" style="top:969.3px;color:#333">Банк идей</div>
<svg class="abs" style="left:34px;top:1013px" width="30" height="28" viewBox="0 0 30 28"><g fill="none" stroke="#4D4D4D" stroke-width="1.5" stroke-linecap="round" stroke-linejoin="round"><path d="M16.6,5.7A8.7,8.7 0 1 0 23.1,12.2"/><path d="M15.6,8.8A5.5,5.5 0 1 0 20,13.2"/><path d="M12.9,12A2.4,2.4 0 1 0 16.6,15.2"/><path d="M15,13.8L19.8,9"/></g><path d="M19.2,8.2L19.6,6.1L21.6,4.2L22,6.3L24.1,6.7L22.2,8.7L20.1,9.1Z" fill="#4D4D4D" stroke="#4D4D4D" stroke-width="0.8" stroke-linejoin="round"/></svg><div class="side" style="top:1018.3px;color:#333">Цели и KPI</div>
<svg class="abs" style="left:34px;top:1061px" width="30" height="28" viewBox="0 0 30 28"><g fill="none" stroke="#4D4D4D" stroke-width="1.5" stroke-linecap="round" stroke-linejoin="round"><path d="M14.55,6.05 C13.57,6.05 12.83,8.73 11.60,9.44 C10.37,10.15 7.68,9.45 7.19,10.30 C6.70,11.15 8.65,13.13 8.65,14.55 C8.65,15.97 6.70,17.95 7.19,18.80 C7.68,19.65 10.37,18.95 11.60,19.66 C12.83,20.37 13.57,23.05 14.55,23.05 C15.53,23.05 16.27,20.37 17.50,19.66 C18.73,18.95 21.42,19.65 21.91,18.80 C22.40,17.95 20.45,15.97 20.45,14.55 C20.45,13.13 22.40,11.15 21.91,10.30 C21.42,9.45 18.73,10.15 17.50,9.44 C16.27,8.73 15.53,6.05 14.55,6.05Z"/><circle cx="14.55" cy="14.55" r="2.5"/></g></svg><div class="side" style="top:1066.3px;color:#333">Настройки</div>
<div class="abs" style="left:206px;top:433px;width:23px;height:23px;border-radius:50%;background:#F5535D;color:#fff;font-size:12px;line-height:23px;text-align:center">1</div>
<svg class="abs" style="left:249px;top:193px" width="20" height="16" viewBox="0 0 20 16"><g fill="none" stroke="#444" stroke-width="1.5" stroke-linecap="round"><path d="M1.2,3.8H10.2M14.8,3.8H17.9M1.2,12.4H4.2M8.8,12.4H17.9"/><circle cx="12.5" cy="3.8" r="2.3"/><circle cx="6.5" cy="12.4" r="2.3"/></g></svg>
<div class="abs" style="left:39px;top:1117px;font-size:13.5px;line-height:16px;color:#333">Еще</div><div class="tri" style="left:80px;top:1121px;border-left-width:5px;border-right-width:5px;border-top-width:6px"></div>
<div class="abs" style="left:39px;top:1165px;font-size:14px;line-height:16px;color:#333;white-space:nowrap">Настроить меню</div><svg class="abs" style="left:157px;top:1165px" width="20" height="16" viewBox="0 0 20 16"><g fill="none" stroke="#444" stroke-width="1.5" stroke-linecap="round"><path d="M1.2,3.8H10.2M14.8,3.8H17.9M1.2,12.4H4.2M8.8,12.4H17.9"/><circle cx="12.5" cy="3.8" r="2.3"/><circle cx="6.5" cy="12.4" r="2.3"/></g></svg>
<div class="abs" style="left:24px;top:1224px;width:192px;height:54px;background:#fff;border-radius:27px"></div><svg class="abs" style="left:46px;top:1240px" width="25" height="24" viewBox="0 0 25 24"><path d="M12.2,0.6C18.6,0.6 23.6,3.9 23.6,9.3C23.6,14.3 19.6,17.6 15.2,18.3L12.6,22.8L11.4,18.4C5.3,18 0.7,14.6 0.7,9.3C0.7,3.9 5.8,0.6 12.2,0.6Z" fill="#7B4BF2"/><path d="M7.2,6.9H17M7.2,11H13.6" stroke="#fff" stroke-width="2.2" stroke-linecap="round"/></svg><div class="abs" style="left:78px;top:1243px;font-size:15.6px;line-height:18px;color:#2E2E2E;white-space:nowrap">Обратная связь</div>


<!-- footer -->
<div class="abs" style="left:319px;top:1225px;font-size:13.8px;line-height:16px;color:#444;white-space:nowrap">© «K-Team», 2023</div>
<div class="abs" style="left:475px;top:1224px;font-size:16px;line-height:18px;color:#2E2E2E;white-space:nowrap">Поддержка24</div>
<div class="abs" style="left:613px;top:1224px;font-size:16px;line-height:18px;color:#2E2E2E;white-space:nowrap">Печать</div>
</body></html>
